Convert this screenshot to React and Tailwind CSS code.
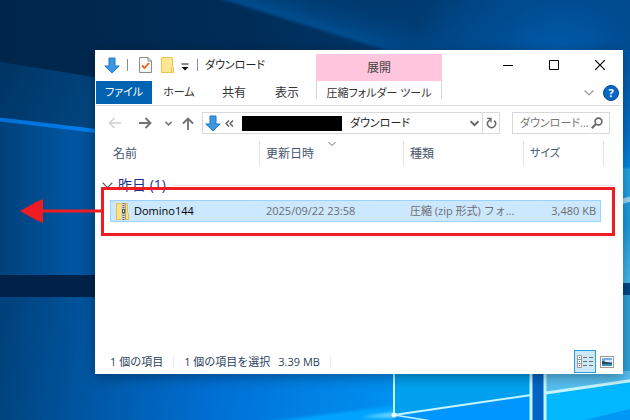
import React from "react";

const palt = "[font-feature-settings:'palt']";

function Wallpaper() {
  return (
    <svg
      className="absolute inset-0 h-full w-full"
      viewBox="0 0 630 420"
      preserveAspectRatio="none"
      aria-hidden="true"
    >
      <defs>
        <linearGradient id="top" x1="0" x2="1" y1="0" y2="0">
          <stop offset="0" stopColor="#00254a" />
          <stop offset="0.4" stopColor="#002d58" />
          <stop offset="0.7" stopColor="#003a70" />
          <stop offset="1" stopColor="#003e78" />
        </linearGradient>
        <radialGradient id="glow" gradientUnits="userSpaceOnUse" cx="560" cy="75" r="150">
          <stop offset="0" stopColor="#0068c0" stopOpacity="0.9" />
          <stop offset="0.5" stopColor="#005cae" stopOpacity="0.5" />
          <stop offset="1" stopColor="#006bc8" stopOpacity="0" />
        </radialGradient>
        <linearGradient id="beam" gradientUnits="userSpaceOnUse" x1="316" y1="29" x2="338" y2="-40">
          <stop offset="0" stopColor="#00569f" stopOpacity="0.8" />
          <stop offset="0.5" stopColor="#004480" stopOpacity="0.35" />
          <stop offset="1" stopColor="#004480" stopOpacity="0" />
        </linearGradient>
        <linearGradient id="upperLeft" x1="0" x2="1" y1="0" y2="0.4">
          <stop offset="0" stopColor="#003463" />
          <stop offset="1" stopColor="#00457f" />
        </linearGradient>
        <linearGradient id="paneLeft" x1="0" x2="1" y1="0" y2="0">
          <stop offset="0" stopColor="#00417b" />
          <stop offset="0.7" stopColor="#0055a0" />
          <stop offset="1" stopColor="#00519a" />
        </linearGradient>
        <linearGradient id="ray" gradientUnits="userSpaceOnUse" x1="0" x2="100" y1="119" y2="132">
          <stop offset="0" stopColor="#0070d6" />
          <stop offset="1" stopColor="#0080ee" />
        </linearGradient>
        <linearGradient id="floor" gradientUnits="userSpaceOnUse" x1="0" x2="400" y1="350" y2="400">
          <stop offset="0" stopColor="#00427c" />
          <stop offset="0.25" stopColor="#0058a6" />
          <stop offset="0.55" stopColor="#0070d4" />
          <stop offset="1" stopColor="#0092f2" />
        </linearGradient>
        <linearGradient id="side" x1="0" x2="0" y1="0" y2="1">
          <stop offset="0" stopColor="#0058a8" />
          <stop offset="0.35" stopColor="#0070cc" />
          <stop offset="0.5" stopColor="#0088e6" />
          <stop offset="0.51" stopColor="#20a8ea" />
          <stop offset="0.75" stopColor="#1b9ce0" />
          <stop offset="1" stopColor="#46bcf2" />
        </linearGradient>
        <filter id="soft" x="-20%" y="-100%" width="140%" height="300%">
          <feGaussianBlur stdDeviation="1.5" />
        </filter>
        <filter id="faint" filterUnits="userSpaceOnUse" x="-10" y="-10" width="650" height="440">
          <feGaussianBlur stdDeviation="0.6" />
        </filter>
      </defs>
      <rect width="630" height="420" fill="url(#top)" />
      <path d="M212 -4L424 62H640V-4Z" fill="url(#beam)" filter="url(#soft)" />
      <rect x="380" width="250" height="230" fill="url(#glow)" />
      <path d="M0 62L100 78V140H0Z" fill="url(#upperLeft)" />
      <path d="M0 119L100 132V276H0Z" fill="url(#paneLeft)" />
      <path d="M-5 119L105 132" stroke="url(#ray)" strokeWidth="4" filter="url(#faint)" />
      <rect y="296" width="630" height="124" fill="url(#floor)" />
      <rect x="-5" y="275" width="110" height="22" fill="#002348" filter="url(#faint)" />
      <path d="M250 424L394 406V424Z" fill="#00a4ff" filter="url(#soft)" />
      <rect x="394" y="370" width="140" height="50" fill="#00a0ee" />
      <path d="M394 415L534 394V420H394Z" fill="#0096ff" />
      <rect x="532" y="370" width="12" height="50" fill="#0064c4" />
      <rect x="545" y="370" width="85" height="50" fill="#55bff0" />
      <path d="M545 393L630 381V420H545Z" fill="#00b8ff" />
      <path d="M585 420L630 409V420Z" fill="#0098f4" />
      <rect x="620" y="50" width="10" height="234" fill="url(#side)" />
      <path d="M620 202L630 199" stroke="#9bdcf8" strokeWidth="5" filter="url(#faint)" />
      <rect x="620" y="283" width="10" height="12" fill="#00488c" />
      <rect x="620" y="295" width="10" height="76" fill="#2aa3df" />
      <g filter="url(#faint)" stroke="#c6f5ff" fill="none">
        <path d="M394 370V415" strokeWidth="2" />
        <path d="M394 415L531 395" strokeWidth="2" />
        <path d="M394 415L475 428" strokeWidth="1.5" />
        <path d="M531 370V425M545 370V425" strokeWidth="3" />
        <path d="M546 393L635 380" strokeWidth="3" />
      </g>
      <path d="M362 417L392 412L398 415L392 418Z" fill="#8ee6ff" opacity="0.7" filter="url(#soft)" />
      <circle cx="394" cy="415" r="2.5" fill="#e9fdff" filter="url(#faint)" />
    </svg>
  );
}

function DownArrow() {
  return (
    <svg width="16" height="17" viewBox="0 0 16 17" className="shrink-0" aria-hidden="true">
      <path d="M5 1H11V9H15.2L8 16L0.8 9H5Z" fill="#3b97e3" stroke="#2178c4" />
    </svg>
  );
}

function Chevron({ className, size = 8, width = 1.5 }) {
  return (
    <svg width={size} height={size} viewBox="0 0 8 8" className={className} aria-hidden="true">
      <path d="M0.5 2L4 5.5L7.5 2" fill="none" stroke="currentColor" strokeWidth={width} />
    </svg>
  );
}

function TitleBar() {
  return (
    <header className="grid h-[31px] grid-cols-[220px_126px_1fr]">
      <div className="flex h-[30px] items-center pl-2">
        <DownArrow />
        <span className="ml-[7px] h-3 w-px bg-[#8c8c8c]" />
        <button aria-label="プロパティ" className="ml-[11px]">
          <svg width="14" height="16" viewBox="0 0 14 16" className="block">
            <path d="M0.5 0.5H9L12.5 4V15.5H0.5Z" fill="#f8f8f8" stroke="#8c8c8c" />
            <path d="M9 0.5V4H12.5" fill="none" stroke="#8c8c8c" />
            <path d="M3 8.5L5.5 11L10 6" fill="none" stroke="#e3601c" strokeWidth="1.8" />
          </svg>
        </button>
        <button aria-label="新しいフォルダー" className="ml-2">
          <svg width="14" height="16" viewBox="0 0 14 16" className="block">
            <path d="M0.5 0.5H11.5V9.5L12.5 10.5V15.5H0.5Z" fill="#ffe791" stroke="#e8c558" />
            <path d="M10.5 15V10.5L11.5 9.5" fill="none" stroke="#e8c558" />
          </svg>
        </button>
        <button aria-label="クイック アクセスのカスタマイズ" className="ml-1.5">
          <svg width="8" height="8" viewBox="0 0 8 8" className="mt-1 block">
            <path d="M0.5 1H7.5" stroke="#111" />
            <path d="M0.5 4H7.5L4 7.5Z" fill="#111" />
          </svg>
        </button>
        <span className="ml-2 h-3 w-px bg-[#8c8c8c]" />
        <h1 className={`ml-[7px] text-[11px] leading-4 whitespace-nowrap text-[#222] ${palt}`}>ダウンロード</h1>
      </div>
      <div className="mt-1 flex items-center justify-center bg-[#ffc6de] text-xs text-[#444]">展開</div>
      <div className="flex h-[30px] justify-end text-black">
        <button aria-label="最小化" className="flex w-[46px] items-center justify-center">
          <svg width="10" height="10"><path d="M0 5.5H10" stroke="currentColor" /></svg>
        </button>
        <button aria-label="最大化" className="flex w-[46px] items-center justify-center">
          <svg width="10" height="10"><path d="M0.5 0.5H9.5V9.5H0.5Z" fill="none" stroke="currentColor" /></svg>
        </button>
        <button aria-label="閉じる" className="flex w-[46px] items-center justify-center">
          <svg width="10" height="10"><path d="M0 0L10 10M10 0L0 10" stroke="currentColor" strokeWidth="1.2" /></svg>
        </button>
      </div>
    </header>
  );
}

function Tabs() {
  return (
    <nav className="mr-px grid h-[25px] grid-cols-[220px_126px_1fr] border-b border-[#dadbdc] text-xs whitespace-nowrap text-[#333]">
      <div className="flex h-[23px]">
        <button className={`w-14 bg-[#0063b1] text-[11px] text-white ${palt}`}>ファイル</button>
        <button className={`w-[54px] text-[11px] ${palt}`}>ホーム</button>
        <button className="w-14">共有</button>
        <button className="w-[50px]">表示</button>
      </div>
      <button className={`h-[18px] border-x border-[#d4d4d4] pt-1 text-[11px] leading-4 ${palt}`}>
        圧縮フォルダー ツール
      </button>
      <div className="flex h-6 items-center justify-end gap-[9px] pr-[3px]">
        <button aria-label="リボンの展開" className="text-[#999]">
          <Chevron size={10} width={1} />
        </button>
        <button
          aria-label="ヘルプ"
          className="flex size-4 items-center justify-center rounded-full border border-[#004a8c] bg-[#0b66c3] text-[11px] font-bold text-white font-['Open_Sans',sans-serif]"
        >
          ?
        </button>
      </div>
    </nav>
  );
}

function NavRow() {
  return (
    <div className="flex h-[22px] items-center pr-[13px] pl-3 text-[#666]">
      <button aria-label="戻る" className="w-[30px] text-[#cfcfcf]">
        <svg width="14" height="12" viewBox="0 0 14 12"><path d="M13 6H1.5M6.5 1L1.5 6L6.5 11" fill="none" stroke="currentColor" strokeWidth="1.5" /></svg>
      </button>
      <button aria-label="進む" className="w-[27px] text-[#707070]">
        <svg width="14" height="12" viewBox="0 0 14 12"><path d="M1 6H12.5M7.5 1L12.5 6L7.5 11" fill="none" stroke="currentColor" strokeWidth="1.8" /></svg>
      </button>
      <button aria-label="最近表示した場所" className="w-[17px] text-[#777]">
        <Chevron size={7} width={1.8} />
      </button>
      <button aria-label="上へ" className="w-5 text-[#707070]">
        <svg width="12" height="13" viewBox="0 0 12 13"><path d="M6 13V1.5M1 6.5L6 1.5L11 6.5" fill="none" stroke="currentColor" strokeWidth="1.8" /></svg>
      </button>
      <div className="flex h-[22px] flex-1 items-center border border-[#d9d9d9] pl-0.5">
        <DownArrow />
        <svg width="9" height="7" viewBox="0 0 9 7" className="ml-1 shrink-0" aria-hidden="true">
          <path d="M4 0.5L1 3.5L4 6.5M8 0.5L5 3.5L8 6.5" fill="none" stroke="#555" strokeWidth="1.3" />
        </svg>
        <span className="ml-2 h-[15px] w-[100px] shrink-0 bg-black" />
        <span className={`ml-2 flex-1 text-[11px] leading-4 whitespace-nowrap text-[#222] ${palt}`}>ダウンロード</span>
        <button aria-label="以前の場所" className="mr-[3px] text-[#666]">
          <Chevron size={9} width={1.8} />
        </button>
        <button aria-label="更新" className="flex h-full w-[17px] items-center justify-center border-l border-[#d9d9d9] text-[#666]">
          <svg width="11" height="12" viewBox="0 0 11 12" className="block">
            <path d="M8.2 3.6A4 4 0 1 1 2.2 4.4L4.6 2" fill="none" stroke="currentColor" strokeWidth="1.5" />
            <path d="M1.2 1.4H5V5.2" fill="none" stroke="currentColor" strokeWidth="1.3" />
          </svg>
        </button>
      </div>
      <div className="ml-3 flex h-[22px] w-[98px] items-center border border-[#d9d9d9] pr-1.5 pl-[7px]">
        <input
          type="text"
          aria-label="ダウンロードの検索"
          placeholder="ダウンロード..."
          className={`w-0 flex-1 text-[11px] leading-4 outline-none placeholder:text-[#777] ${palt}`}
        />
        <svg width="12" height="12" viewBox="0 0 12 12" className="shrink-0" aria-hidden="true">
          <circle cx="7.5" cy="4.5" r="3.4" fill="none" stroke="#666" strokeWidth="1.6" />
          <path d="M5 7L0.8 11.2" stroke="#666" strokeWidth="2" />
        </svg>
      </div>
    </div>
  );
}

function ZipIcon() {
  return (
    <svg width="14" height="17" viewBox="0 0 14 17" className="shrink-0" aria-hidden="true">
      <path d="M0.5 0.5H11.5V9.5L12.5 10.5V16.5H0.5Z" fill="#ffe380" stroke="#e5bd4c" />
      <rect x="5" width="5" height="17" fill="#d9d5c8" />
      <path d="M7.5 0V17" stroke="#666" strokeWidth="2" strokeDasharray="1 1" />
      <path d="M9.5 0V17" stroke="#a39d88" />
      <rect x="6.5" y="6.5" width="2" height="3" fill="#f2f2f2" stroke="#555" />
    </svg>
  );
}

function FileTable() {
  const head = "h-[25px] border-r border-[#e2e2e2] p-0 text-left text-xs font-normal text-[#44566f]";
  const cell = "h-[22px] border-y border-[#99d1ff] bg-[#cce8ff] p-0 text-[11px] leading-4 whitespace-nowrap text-[#6d6d6d]";
  return (
    <div className="mx-1.5 mt-[7px] pr-0.5">
      <table className="w-full table-fixed border-separate border-spacing-0">
        <colgroup>
          <col className="w-2" />
          <col />
          <col className="w-36" />
          <col className="w-[120px]" />
          <col className="w-[77px]" />
          <col className="w-3.5" />
        </colgroup>
        <thead>
          <tr>
            <td className="p-0" />
            <th scope="col" className={`${head} pl-[3px]`}>名前</th>
            <th scope="col" className={`${head} relative pl-1.5`}>
              更新日時
              <Chevron size={8} width={1} className="absolute -top-px left-[68px] text-[#666]" />
            </th>
            <th scope="col" className={`${head} pl-1.5`}>種類</th>
            <th scope="col" className={`h-[25px] p-0 pl-1.5 text-left text-[11px] font-normal text-[#44566f] ${palt}`}>サイズ</th>
            <td className="p-0">
              <div className="h-[25px] w-[3px] border-r border-[#e2e2e2]" />
            </td>
          </tr>
        </thead>
        <tbody>
          <tr>
            <th colSpan="6" scope="rowgroup" className="h-[34px] p-0 font-normal">
              <button className="mt-1 flex w-full items-center text-left text-sm leading-5 whitespace-nowrap text-[#1e3287]">
                <Chevron size={11} width={0.8} className="text-[#555]" />
                <span className="ml-[5px]">昨日 (1)</span>
                <span className="ml-2 h-px flex-1 bg-[#e2e2e2]" />
              </button>
            </th>
          </tr>
          <tr>
            <td className="p-0" />
            <td className={`${cell} border-l`}>
              <div className="flex items-center pl-[5px]">
                <ZipIcon />
                <span className="ml-1 text-[11px] text-black">Domino144</span>
              </div>
            </td>
            <td className={`${cell} pl-1.5`}>2025/09/22 23:58</td>
            <td className={`${cell} pl-1.5`}>圧縮 (zip 形式) フォ...</td>
            <td className={`${cell} border-r pr-1 text-right`}>3,480 KB</td>
            <td className="p-0" />
          </tr>
        </tbody>
      </table>
    </div>
  );
}

function StatusBar() {
  return (
    <footer className="mt-auto flex h-[25px] items-center pr-[9px] pl-3.5 text-[11px] leading-4 whitespace-nowrap text-[#2b3f5e]">
      <span>1 個の項目</span>
      <span className="ml-2.5 h-3 w-px bg-[#ececec]" />
      <span className="ml-2.5">1 個の項目を選択</span>
      <span className="ml-2">3.39 MB</span>
      <span className="ml-2.5 h-3 w-px bg-[#ececec]" />
      <button aria-label="詳細" className="ml-auto flex h-[23px] w-[22px] items-center justify-center border border-[#26a0da] bg-[#cce8f7]">
        <svg width="16" height="13" viewBox="0 0 16 13">
          <path d="M0.5 0.5H4.5V12.5H0.5ZM0.5 4.5H4.5M0.5 8.5H4.5" fill="#fff" stroke="#9a9a9a" />
          <path d="M2 2.5H3" stroke="#555" />
          <path d="M2 6.5H3" stroke="#1b87d6" />
          <path d="M2 10.5H3" stroke="#d22" />
          <path d="M6 2.5H10M12 2.5H16M6 6.5H10M12 6.5H16M6 10.5H10M12 10.5H16" stroke="#707070" />
        </svg>
      </button>
      <button aria-label="大アイコン" className="ml-1">
        <svg width="14" height="12" viewBox="0 0 14 12" className="block">
          <rect x="0.5" y="0.5" width="13" height="11" fill="#fff" stroke="#999" />
          <rect x="2" y="2" width="10" height="8" fill="#6fb0ec" />
          <path d="M5 4H12V6H5Z" fill="#d2e8f8" />
          <path d="M2 5L6 6L12 7V8H2Z" fill="#28465c" />
          <path d="M2 8H12V10H2Z" fill="#3b8db5" />
        </svg>
      </button>
    </footer>
  );
}

function DragHint() {
  return (
    <div className="pointer-events-none absolute top-[137px] right-2 left-1.5 h-[49px] border-[3px] border-[#ee1c24]" aria-hidden="true">
      <svg width="84" height="24" viewBox="0 0 84 24" className="absolute top-[9px] right-full">
        <path d="M0 12L16 3L23 0V10.5H84V13.5H23V24L16 21Z" fill="#ee1c24" />
      </svg>
    </div>
  );
}

export default function App() {
  return (
    <div className="relative flex min-h-screen overflow-hidden bg-[#00427c] pt-[50px] pr-[7px] pb-[46px] pl-[95px] font-['Open_Sans','Noto_Sans_CJK_JP',sans-serif]">
      <Wallpaper />
      <main className="relative flex flex-1 flex-col bg-white pl-px shadow-[0_3px_12px_rgba(0,0,0,0.35)]">
        <TitleBar />
        <Tabs />
        <div className="mt-1.5">
          <NavRow />
        </div>
        <FileTable />
        <StatusBar />
        <DragHint />
      </main>
    </div>
  );
}
